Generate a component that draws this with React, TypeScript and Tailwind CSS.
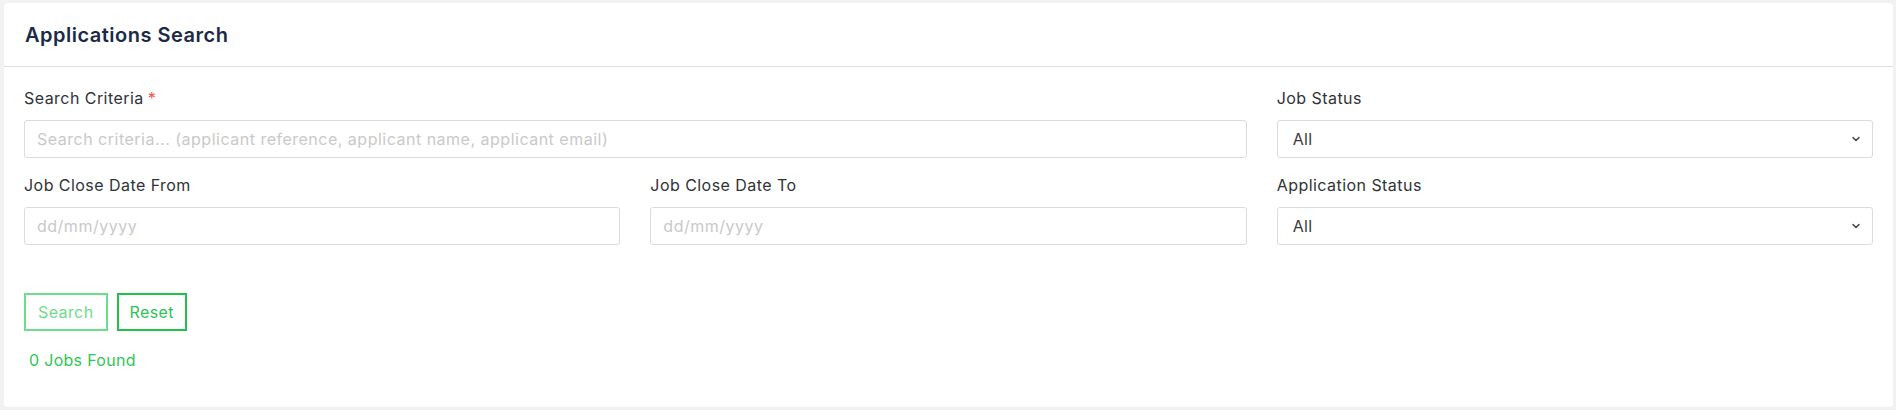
import { ChevronDown } from 'lucide-react'

function Field({ label, required, children }: { label: string; required?: boolean; children: React.ReactNode }) {
  return (
    <div className="flex flex-col">
      <label className="text-[16px] leading-[22px] tracking-[0.45px] text-[#2f3337] mb-[11px]">
        {label}
        {required && <span className="text-[#e5534b] ml-1">*</span>}
      </label>
      {children}
    </div>
  )
}

function TextInput({ placeholder }: { placeholder: string }) {
  return (
    <input
      type="text"
      placeholder={placeholder}
      className="h-[38px] w-full rounded-[3px] border border-[#dcdcdc] bg-white px-[12px] text-[16px] tracking-[0.5px] text-[#333] outline-none placeholder:text-[#c9c9c9]"
    />
  )
}

function Select() {
  return (
    <div className="relative">
      <select className="h-[38px] w-full appearance-none rounded-[3px] border border-[#dcdcdc] bg-white pl-[15px] pr-8 text-[16px] tracking-[0.3px] text-[#3a3a3a] outline-none">
        <option>All</option>
      </select>
      <ChevronDown
        className="pointer-events-none absolute right-[11px] top-[13px] text-[#444]"
        size={12}
        strokeWidth={3}
      />
    </div>
  )
}

function App() {
  return (
    <div className="min-h-[410px] bg-[#f2f2f2] pt-[3px] pl-[4px] pr-[3px] pb-[3px]" style={{ fontFamily: 'Inter, "Noto Sans", sans-serif' }}>
      <div className="bg-white rounded-[4px] h-[404px]">
        <div className="h-[64px] flex items-center px-[21px] border-b border-[#dedede]">
          <h1 className="text-[20px] font-semibold tracking-[0.5px] text-[#1b2a47]">Applications Search</h1>
        </div>
        <div className="px-[20px] pt-[20px]">
          <div className="grid grid-cols-3 gap-x-[30px] gap-y-[16px]">
            <div className="col-span-2">
              <Field label="Search Criteria" required>
                <TextInput placeholder="Search criteria... (applicant reference, applicant name, applicant email)" />
              </Field>
            </div>
            <Field label="Job Status">
              <Select />
            </Field>
            <Field label="Job Close Date From">
              <TextInput placeholder="dd/mm/yyyy" />
            </Field>
            <Field label="Job Close Date To">
              <TextInput placeholder="dd/mm/yyyy" />
            </Field>
            <Field label="Application Status">
              <Select />
            </Field>
          </div>
          <div className="flex gap-[9px] mt-[48px]">
            <button className="h-[38px] px-[12px] border-2 border-[#6ddc8b] text-[#6ddc8b] text-[16px] tracking-[0.4px]">Search</button>
            <button className="h-[38px] px-[11px] border-2 border-[#1ec44a] text-[#2cc456] font-normal text-[16px] tracking-[0.4px]">Reset</button>
          </div>
          <p className="mt-[17px] ml-[5px] text-[16px] tracking-[0.3px] text-[#2ec753]">0 Jobs Found</p>
        </div>
      </div>
    </div>
  )
}

export default App
